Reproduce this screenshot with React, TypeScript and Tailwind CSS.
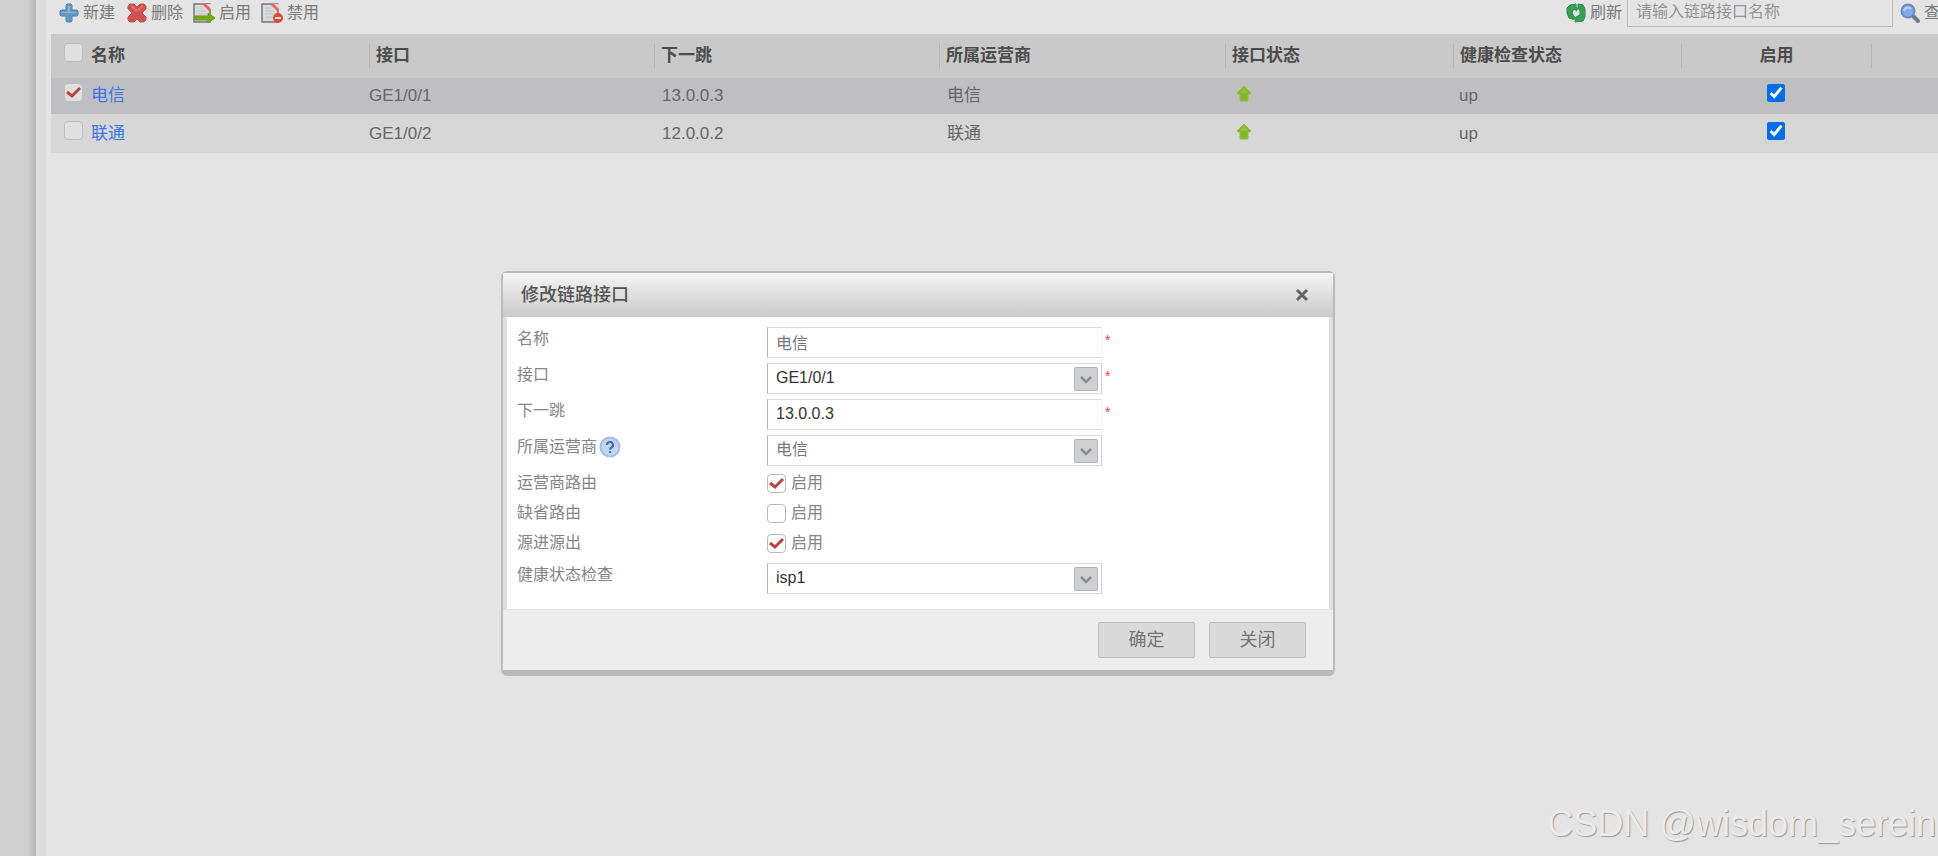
import { useState, type ReactNode } from 'react';
import clsx from 'clsx';

const links = [
  { id: 'ct', name: '电信', port: 'GE1/0/1', nextHop: '13.0.0.3', isp: '电信', health: 'up', selected: true },
  { id: 'cu', name: '联通', port: 'GE1/0/2', nextHop: '12.0.0.2', isp: '联通', health: 'up', selected: false },
];

function PlusIcon() {
  return (
    <svg viewBox="0 0 20 20" className="h-5 w-5">
      <path
        d="M8 1h4l1 1v5h5l1 1v4l-1 1h-5v5l-1 1H8l-1-1v-5H2l-1-1V8l1-1h5V2z"
        fill="#6698c2"
        stroke="#4f83b0"
      />
      <path d="M9 3h2v6h6v1H3V9h6z" fill="#8fb5d6" />
    </svg>
  );
}

function DeleteIcon() {
  return (
    <svg viewBox="0 0 20 20" className="h-5 w-5">
      <path
        d="M3 1h4l3 3 3-3h4l2 2v3l-4 4 4 4v3l-2 2h-4l-3-3-3 3H3l-2-2v-3l4-4-4-4V3z"
        fill="#d2504f"
        stroke="#c25553"
        strokeLinejoin="round"
      />
      <path d="M4 3l6 5 6-5" fill="none" stroke="#dd7472" strokeWidth="2" />
    </svg>
  );
}

function PageShape() {
  return (
    <>
      <path d="M1 2h16v18H1z" fill="#d9dadd" stroke="#73757f" strokeWidth="1.500" />
      <path d="M4 6h6M4 9h9M4 12h10M4 15h8" stroke="#c3c5ca" />
      <path d="M9 2h8v8z" fill="#e5655f" />
      <path d="M13 2h5v5z" fill="#f0d5d3" />
    </>
  );
}

function EnableIcon() {
  return (
    <svg viewBox="0 0 24 22" className="h-[22px] w-6">
      <PageShape />
      <path d="M2 14h13v-3l7 5-7 5v-3H2z" fill="#74ab12" stroke="#6a9d18" />
    </svg>
  );
}

function DisableIcon() {
  return (
    <svg viewBox="0 0 24 22" className="h-[22px] w-6">
      <PageShape />
      <circle cx="17" cy="16" r="5" fill="#dd4a2c" />
      <path d="M14 16h6" stroke="#f3dcd6" strokeWidth="2" />
    </svg>
  );
}

function RefreshIcon() {
  return (
    <svg viewBox="0 0 20 20" className="h-5 w-5">
      <path d="M10 1L4 2 1 5v5l2 5 4 1v-4l-1-2 1-3 3-1z" fill="#35a158" stroke="#2b8b4a" />
      <path d="M9 19l8-1 2-4V6l-2-4-5-1v4l2 3v4l-4 2z" fill="#35a158" stroke="#2b8b4a" />
      <path d="M8 3l5 2-3 4zM6 10l5 6-5 1z" fill="#2f9a50" />
    </svg>
  );
}

function SearchIcon() {
  return (
    <svg viewBox="0 0 20 20" className="h-5 w-5">
      <path d="M13 13l5 5" stroke="#77798a" strokeWidth="4" strokeLinecap="round" />
      <circle cx="8" cy="8" r="6.500" fill="#85abe6" stroke="#6b86c4" strokeWidth="2" />
      <path d="M4 8a4 4 0 0 1 7-2" fill="none" stroke="#b9d0f4" strokeWidth="2" />
    </svg>
  );
}

function UpArrowIcon() {
  return (
    <svg viewBox="0 0 16 18" className="h-[18px] w-4" role="img" aria-label="up">
      <path d="M8 1l7 7-1 1h-2v7H4V9H2L1 8z" fill="#84b52c" stroke="#92bd44" strokeLinejoin="round" />
      <path d="M8 3l4 5H4z" fill="#94c23f" />
    </svg>
  );
}

function HelpIcon() {
  return (
    <svg viewBox="0 0 22 22" className="h-[22px] w-[22px]">
      <circle cx="11" cy="11" r="9.500" fill="#c3d5f2" stroke="#a5bdeb" strokeWidth="2" />
      <path
        d="M8 9a3 3 0 1 1 4.500 2.500Q11 12.300 11 13.500M11 15v2"
        fill="none"
        stroke="#4a6da8"
        strokeWidth="2.200"
      />
    </svg>
  );
}

function ToolButton({ icon, label }: { icon: ReactNode; label: string }) {
  return (
    <button type="button" className="flex items-center gap-0.5 text-[#7a7a7a]">
      <span className="flex w-6 justify-center">{icon}</span>
      {label}
    </button>
  );
}

type TickBoxProps = { id?: string; label?: string; defaultChecked?: boolean; dim?: boolean };

function TickBox({ id, label, defaultChecked, dim }: TickBoxProps) {
  return (
    <span className="relative block h-[19px] w-[19px] shrink-0">
      <input
        id={id}
        type="checkbox"
        aria-label={label}
        defaultChecked={defaultChecked}
        className={clsx(
          'peer block h-[19px] w-[19px] appearance-none rounded-sm border',
          dim ? 'border-[#bdbdbd] bg-[#e0e0e0]' : 'border-[#b9b9bd] bg-white',
        )}
      />
      <svg
        viewBox="0 0 19 19"
        className="pointer-events-none absolute inset-0 hidden h-[19px] w-[19px] peer-checked:block"
      >
        <path d="M3 9l5 4 8-8" fill="none" stroke="#b84545" strokeWidth="3" />
      </svg>
    </span>
  );
}

function FieldRow({ id, label, help, children }: { id: string; label: string; help?: boolean; children: ReactNode }) {
  return (
    <div className="flex h-9 items-center">
      <div className="flex w-[250px] shrink-0 items-center pb-1.5">
        <label htmlFor={id}>{label}</label>
        {help && (
          <button type="button" aria-label="帮助" className="ml-0.5">
            <HelpIcon />
          </button>
        )}
      </div>
      {children}
    </div>
  );
}

const fieldBox =
  'block h-[31px] w-[335px] appearance-none border border-t-[#dcdcdf] border-b-[#dcdcdf] border-l-[#b4b4bb] bg-white px-2 text-base';

function TextField({ id, defaultValue, cjk }: { id: string; defaultValue: string; cjk?: boolean }) {
  return (
    <>
      <input
        id={id}
        type="text"
        defaultValue={defaultValue}
        className={clsx(fieldBox, 'border-r-[#f6f6f6]', cjk ? 'text-[#77777d]' : 'text-[#333]')}
      />
      <Required />
    </>
  );
}

type SelectFieldProps = { id: string; options: string[]; required?: boolean; cjk?: boolean };

function SelectField({ id, options, required, cjk }: SelectFieldProps) {
  return (
    <>
      <span className="relative">
        <select id={id} className={clsx(fieldBox, 'border-r-[#cfcfd4]', cjk ? 'text-[#77777d]' : 'text-[#333]')}>
          {options.map((o) => (
            <option key={o}>{o}</option>
          ))}
        </select>
        <span className="pointer-events-none absolute top-1 right-1 flex h-6 w-6 items-center justify-center rounded-xs border border-[#b3b4b8] bg-[#cfd0d3]">
          <svg viewBox="0 0 14 14" className="h-3.5 w-3.5">
            <path d="M2 5l5 5 5-5" fill="none" stroke="#8b8c8f" strokeWidth="2.500" />
          </svg>
        </span>
      </span>
      {required && <Required />}
    </>
  );
}

function Required() {
  return <span className="ml-[3px] pb-1 text-sm text-[#ff3b3b]">*</span>;
}

function CheckRow({ id, label, defaultChecked }: { id: string; label: string; defaultChecked?: boolean }) {
  return (
    <div className="flex h-[30px] items-center">
      <span className="w-[250px] shrink-0">{label}</span>
      <TickBox id={id} defaultChecked={defaultChecked} />
      <label htmlFor={id} className="ml-[5px]">启用</label>
    </div>
  );
}

function EditDialog({ onClose }: { onClose: () => void }) {
  return (
    <form
      role="dialog"
      aria-labelledby="dialog-title"
      onSubmit={(e) => e.preventDefault()}
      className="absolute top-[271px] left-[501px] w-[834px] rounded-md border-2 border-b-[6px] border-[#bababa] bg-[#ededed]"
    >
      <header className="flex h-11 items-center justify-between bg-linear-to-b from-[#f5f5f5] to-[#cacaca] pr-6 pl-[18px]">
        <h2 id="dialog-title" className="text-lg font-medium text-[#555]">修改链路接口</h2>
        <button type="button" aria-label="关闭窗口" onClick={onClose}>
          <svg viewBox="0 0 14 14" className="h-3.5 w-3.5">
            <path d="M2 2l10 10M12 2L2 12" stroke="#666" strokeWidth="3" />
          </svg>
        </button>
      </header>

      <div className="border-x-4 border-[#e0e0e0] bg-white px-2.5 pt-[7px] pb-[13px] text-base text-[#85858b]">
        <FieldRow id="f-name" label="名称">
          <TextField id="f-name" defaultValue="电信" cjk />
        </FieldRow>
        <FieldRow id="f-port" label="接口">
          <SelectField id="f-port" options={['GE1/0/1', 'GE1/0/2']} required />
        </FieldRow>
        <FieldRow id="f-hop" label="下一跳">
          <TextField id="f-hop" defaultValue="13.0.0.3" />
        </FieldRow>
        <FieldRow id="f-isp" label="所属运营商" help>
          <SelectField id="f-isp" options={['电信', '联通']} cjk />
        </FieldRow>
        <CheckRow id="f-isp-route" label="运营商路由" defaultChecked />
        <CheckRow id="f-default-route" label="缺省路由" />
        <CheckRow id="f-source-route" label="源进源出" defaultChecked />
        <div className="pt-0.5">
          <FieldRow id="f-health" label="健康状态检查">
            <SelectField id="f-health" options={['isp1']} />
          </FieldRow>
        </div>
      </div>

      <footer className="flex h-[61px] items-center justify-end gap-3.5 border-t border-[#e2e2e2] pr-[27px] text-lg text-[#747474]">
        <button type="submit" className="h-9 w-[97px] rounded-xs border border-[#bcbcbc] bg-[#dadada]">
          确定
        </button>
        <button type="button" onClick={onClose} className="h-9 w-[97px] rounded-xs border border-[#bcbcbc] bg-[#dadada]">
          关闭
        </button>
      </footer>
    </form>
  );
}

function HeadCell({ children, center }: { children?: ReactNode; center?: boolean }) {
  return (
    <th className="p-0 font-bold">
      <div
        className={clsx(
          'flex h-6 items-center border-l border-[#b5b5b5]',
          center ? 'justify-center' : 'pl-1.5',
        )}
      >
        {children}
      </div>
    </th>
  );
}

function LinkTable() {
  return (
    <table className="w-full table-fixed border-collapse text-left text-[17px] text-[#666]">
      <colgroup>
        <col className="w-[318px]" />
        <col className="w-[285px]" />
        <col className="w-[285px]" />
        <col className="w-[286px]" />
        <col className="w-[228px]" />
        <col className="w-[228px]" />
        <col className="w-[190px]" />
        <col />
      </colgroup>
      <thead>
        <tr className="h-11 bg-[#c9c9c9] text-[#4c4c4c]">
          <th className="p-0 font-bold">
            <div className="flex items-start gap-2 pl-[13px]">
              <TickBox label="全选" dim />
              名称
            </div>
          </th>
          <HeadCell>接口</HeadCell>
          <HeadCell>下一跳</HeadCell>
          <HeadCell>所属运营商</HeadCell>
          <HeadCell>接口状态</HeadCell>
          <HeadCell>健康检查状态</HeadCell>
          <HeadCell center>启用</HeadCell>
          <HeadCell />
        </tr>
      </thead>
      <tbody>
        {links.map((l) => (
          <tr key={l.id} className={l.selected ? 'h-9 bg-[#bfbfc1]' : 'h-[39px] bg-[#d7d7d7]'}>
            <td className="p-0">
              <div className="flex items-start gap-2 pl-[13px]">
                <TickBox label={`选择${l.name}`} defaultChecked={l.selected} dim />
                <a href="#" className="text-[#3d74e8]">{l.name}</a>
              </div>
            </td>
            <td className="p-0">{l.port}</td>
            <td className="p-0 pl-2">{l.nextHop}</td>
            <td className="p-0 pl-2">{l.isp}</td>
            <td className="p-0 pb-1 pl-[11px]"><UpArrowIcon /></td>
            <td className="p-0 pl-1.5">{l.health}</td>
            <td className="p-0 pb-1.5">
              <input
                type="checkbox"
                defaultChecked
                aria-label={`启用${l.name}`}
                className="mx-auto block h-[18px] w-[18px] accent-[#006de9]"
              />
            </td>
            <td className="p-0" />
          </tr>
        ))}
      </tbody>
    </table>
  );
}

export default function App() {
  const [open, setOpen] = useState(true);

  return (
    <div className="relative flex h-screen overflow-hidden bg-[#e4e4e4] font-['Liberation_Sans','Noto_Sans_CJK_SC',sans-serif]">
      <aside className="w-9 shrink-0 bg-linear-to-r from-[#d0d0d0] from-75% to-[#b4b4b4]" />
      <div className="w-2.5 shrink-0 bg-linear-to-r from-[#e2e2e2] to-[#d9d9d9]" />

      <main className="min-w-0 flex-1 pl-[5px]">
        <div className="flex h-[34px] items-start justify-between overflow-hidden text-base whitespace-nowrap">
          <div className="flex h-[25px] items-center gap-2.5 pl-1.5">
            <ToolButton icon={<PlusIcon />} label="新建" />
            <ToolButton icon={<DeleteIcon />} label="删除" />
            <ToolButton icon={<EnableIcon />} label="启用" />
            <ToolButton icon={<DisableIcon />} label="禁用" />
          </div>
          <div className="-mr-[18px] flex shrink-0 items-start">
            <div className="flex h-[25px] items-center">
              <ToolButton icon={<RefreshIcon />} label="刷新" />
            </div>
            <input
              type="text"
              aria-label="链路接口名称"
              placeholder="请输入链路接口名称"
              className="mx-[5px] h-[27px] w-[266px] border border-t-0 border-[#bcbcbc] bg-transparent px-2 pb-0.5 placeholder:text-[#949494]"
            />
            <div className="flex h-[25px] items-center">
              <ToolButton icon={<SearchIcon />} label="查询" />
            </div>
          </div>
        </div>
        <LinkTable />
      </main>

      {open && <EditDialog onClose={() => setOpen(false)} />}

      <div className="absolute right-0.5 bottom-3 text-4xl text-[#ebebeb] [text-shadow:1px_1px_1px_#9a9a9a]">
        CSDN @wisdom_serein
      </div>
    </div>
  );
}
